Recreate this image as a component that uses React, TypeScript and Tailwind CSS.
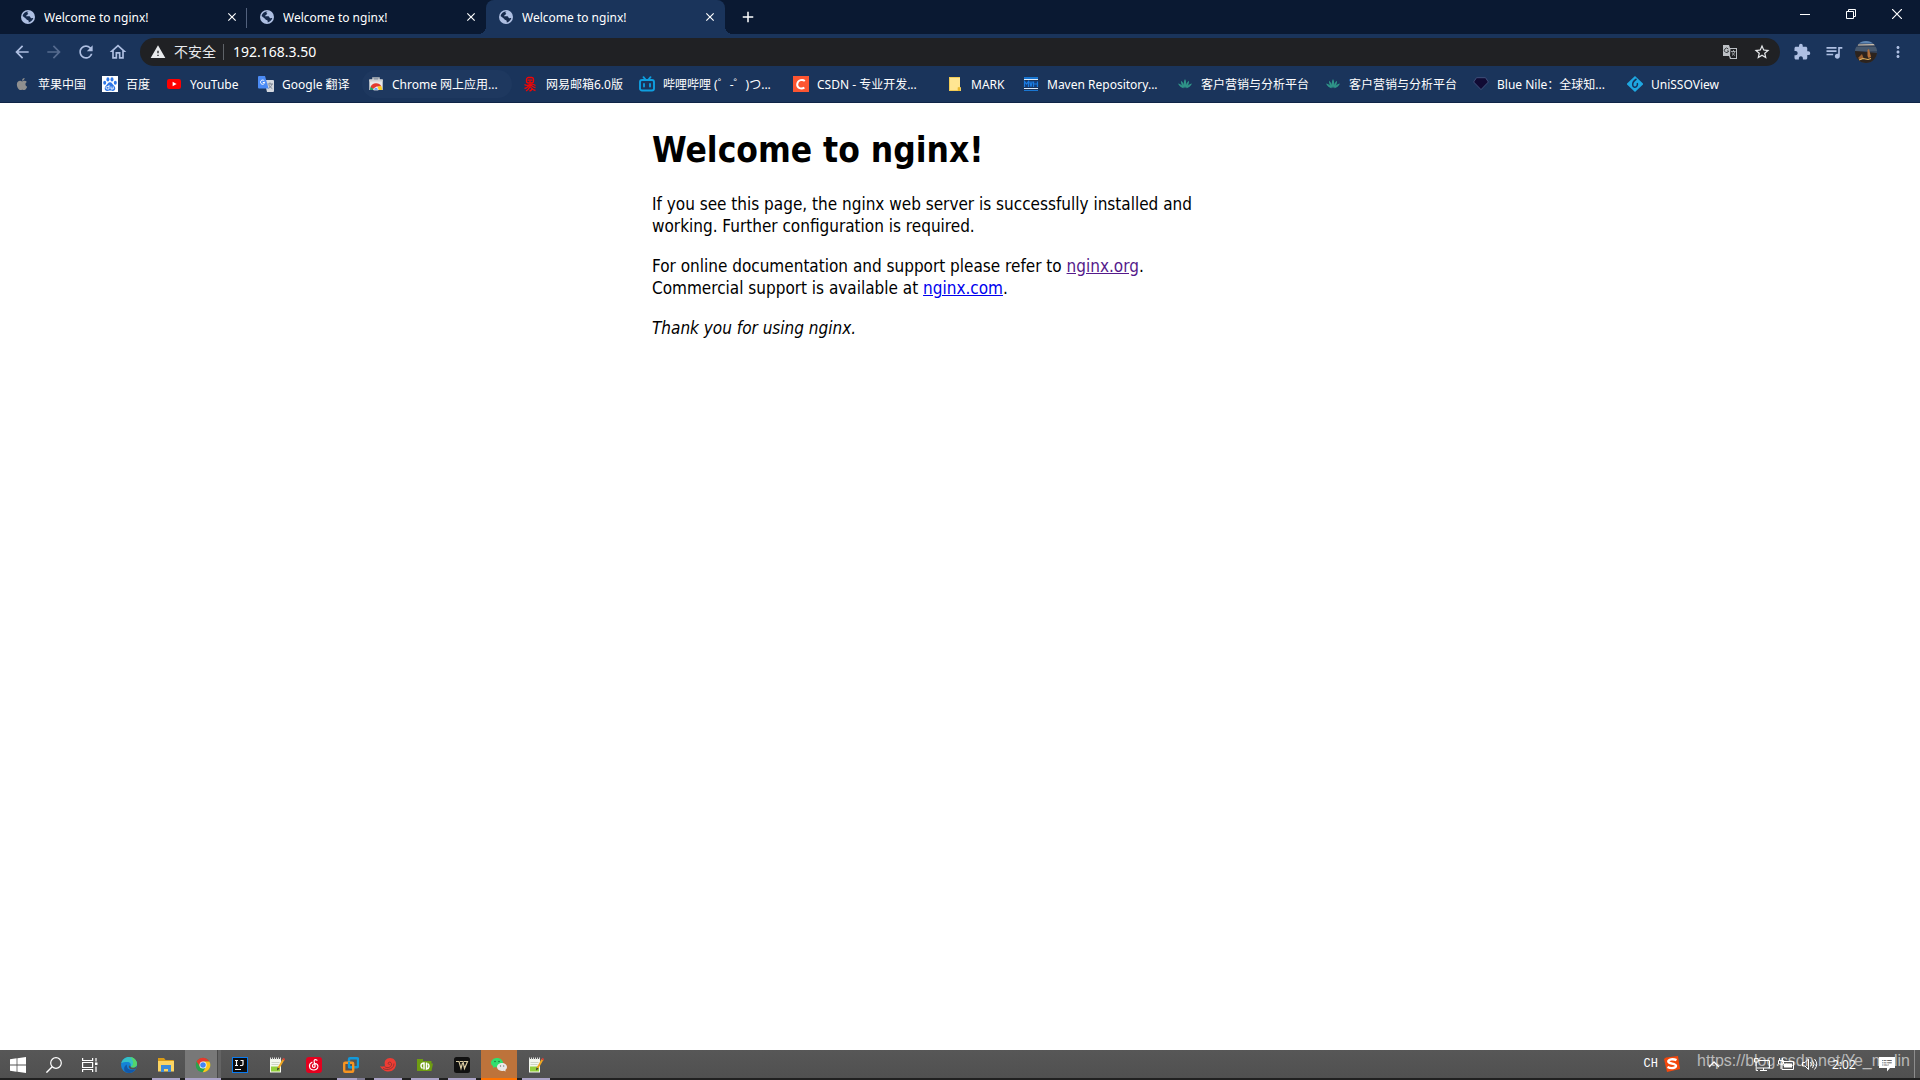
import React from "react";
import { FaApple } from "react-icons/fa";
import { MdArrowBack, MdArrowForward, MdRefresh, MdExtension, MdQueueMusic, MdMoreVert, MdStarBorder, MdWarning, MdClose, MdAdd, MdOutlineHome } from "react-icons/md";

const Svg = ({ children, className = "size-4", box = "0 0 16 16" }: { children: React.ReactNode; className?: string; box?: string }) => (
  <svg viewBox={box} className={`shrink-0 ${className}`} fill="none" aria-hidden="true">{children}</svg>
);

const Globe = () => (
  <Svg className="size-[14px]" box="0 0 14 14">
    <circle cx="7" cy="7" r="7" fill="#aebfe2" />
    <path d="M7.8 1.500C6 2 6 3.300 7.300 3.600 7.200 5 5.200 4.900 5 6.300H8.300c1.200.2.9 1.500 2 1.900.8.200 1.400-.3 2-.1-.5 2-2.300 4-4.600 4.500V10.900C7.400 9.800 5.400 10.200 5 8.700L1.600 6C2 3.400 4.600 1.300 7.800 1.500Z" fill="#15294b" />
  </Svg>
);

const Baidu = () => (
  <Svg>
    <rect width="16" height="16" fill="#fff" />
    <g fill="#2e77e8">
      <ellipse cx="5.9" cy="3.4" rx="1.5" ry="2.1" />
      <ellipse cx="10" cy="3.4" rx="1.5" ry="2.1" />
      <ellipse cx="2.7" cy="6.8" rx="1.5" ry="2" />
      <ellipse cx="13.3" cy="6.8" rx="1.5" ry="2" />
      <path d="M8 6.3c2 0 2.4 2 4 3.4 2 1.8 1.6 5-1 5.2-1.4.1-1.6-.3-3-.3s-1.6.4-3 .3c-2.6-.2-3-3.4-1-5.2C5.6 8.3 6 6.3 8 6.3Z" />
    </g>
    <path d="M7 9v4H5.2a1 1 0 0 1 0-2.4H7M9 10.500V13h2.200v-2.500" stroke="#fff" strokeWidth=".9" />
  </Svg>
);

const YouTube = () => (
  <Svg>
    <rect x="1" y="3" width="14" height="10" rx="2.200" fill="#f00" />
    <path d="m6.600 5.800 4 2.200-4 2.200Z" fill="#fff" />
  </Svg>
);

const Translate = () => (
  <Svg>
    <path d="M6 4h9a1 1 0 0 1 1 1v10a1 1 0 0 1-1 1H9Z" fill="#d4d8df" />
    <path d="M9.500 8H15M12 6.500V8m2 0c-.5 2-2 3.500-3.500 4.500M10.800 9c.8 1.600 2 2.800 3.500 3.600" stroke="#727d8c" strokeWidth=".9" />
    <path d="M1 0h6l3.600 12.500H1a1 1 0 0 1-1-1V1a1 1 0 0 1 1-1Z" fill="#4b8bf5" />
    <path d="M6.300 4.900A2.100 2.100 0 1 0 6.700 6.500H4.800" stroke="#fff" strokeWidth="1" />
  </Svg>
);

const WebStore = () => (
  <Svg>
    <path d="M5 4V2h6v2" stroke="#b9bcc0" strokeWidth="1.600" />
    <path d="M1.300 3.500h13.400V14H1.300Z" fill="#e8e8e8" />
    <path d="M1.300 3.500h13.400v2H1.300Z" fill="#cfd0d2" />
    <path d="M2 14a6 6 0 0 1 1.200-4L6 14Z" fill="#22a45d" />
    <path d="M2.600 11A6 6 0 0 1 13.400 10.500H8.500L6 13Z" fill="#e33b2e" />
    <path d="M13.200 10A6 6 0 0 1 14 14H9l1-3.500Z" fill="#fbcb1e" />
    <path d="M5.700 14a2.300 2.300 0 0 1 4.600 0Z" fill="#4285f4" stroke="#fff" strokeWidth=".7" />
  </Svg>
);

const NetEase = () => (
  <Svg>
    <g stroke="#f30505" strokeWidth="1.300">
      <rect x="4.500" y="1.500" width="7" height="5.500" rx="2" />
      <path d="M5.500 4.200h5M8 5v2M2.500 8.500c2 1.500 3.500 1 5.500 0s3.500-.5 5.500 1M2.500 12.500c3-.5 3.500-2.500 5.500-3.500 2 0 3 2.500 5.500 2.500M4 15c2.500-1 3-3 4-4.500 1 1.500 3 3.500 5.500 4M7.500 15c2-.5 2.500-1.500 3-3" />
    </g>
  </Svg>
);

const Bili = () => (
  <Svg>
    <rect x="1" y="4" width="14" height="10.500" rx="2" stroke="#0f9fe0" strokeWidth="1.900" />
    <path d="m4.500 1.200 2 2.300m5-2.300-2 2.300M5 8v2.500M11 8v2.500" stroke="#0f9fe0" strokeWidth="1.800" strokeLinecap="round" />
  </Svg>
);

const Csdn = () => (
  <Svg>
    <rect width="16" height="16" fill="#fc5531" />
    <path d="M11.800 4.900C9.800 3.200 4.800 3.400 4.200 8.200c-.4 4.200 4.200 5.200 7.200 3.500" stroke="#fff" strokeWidth="2" />
  </Svg>
);

const Note = () => (
  <Svg>
    <path d="M2 1h11v10l1 1v3H2Z" fill="#ffe692" />
    <path d="M2.500 1v14M2 1.500h11M2 14.500h9v-3h2.500" stroke="#f2cb55" />
    <path d="M11 11.500h2.500V15H11Z" fill="#e9b92f" />
  </Svg>
);

const Maven = () => (
  <Svg>
    <path d="M1 1h14v2H1Zm0 13h14v1H1Z" fill="#1976d2" />
    <path d="M1 3h14v1H1Zm0 9h14v1H1Z" fill="#dceafa" />
    <path d="M1 5h14v6H1Z" fill="#153d79" />
    <path d="M1.500 11V5.500L3.500 8l2-2.500V11M6.800 5.500l1.200 5 1.200-5M10.500 11V5.500M10.500 8h4M14.500 5.500V11" stroke="#1a7be0" strokeWidth="1.200" />
  </Svg>
);

const Leaf = () => (
  <Svg>
    <path d="M8 12C6.300 9 6.500 5 8 3c1.500 2 1.700 6 0 9ZM7.500 12C5 10.500 3.700 7.500 4 4.800 6 6 7.600 9 7.500 12Zm1 0C8.400 9 10 6 12 4.800c.3 2.700-1 5.700-3.500 7.200ZM7 12.300C4.500 12 2 10 1 7.500c2.500.2 5 2 6 4.800Zm2 0c1-2.800 3.500-4.600 6-4.800-1 2.500-3.500 4.500-6 4.800Z" fill="#2f9488" />
  </Svg>
);

const Gem = () => (
  <Svg>
    <path d="M3.500 1.700h9L15.400 6 8 13.600.6 6Z" fill="#100a33" stroke="#40507a" strokeWidth="1" strokeLinejoin="round" />
  </Svg>
);

const Uni = () => (
  <Svg>
    <path d="M8 0 15.700 7.200a1 1 0 0 1 0 1.600L8 16 .3 8.800a1 1 0 0 1 0-1.600Z" fill="#1ea7e1" />
    <path d="M9.500 3C7 4.500 5.500 6.500 5.700 9c.2 2.600 3.200 2.900 4.300.9.600-1.200.6-2 .3-2.900" stroke="#15325c" strokeWidth="1.500" />
  </Svg>
);

const tabs = [
  { title: "Welcome to nginx!", active: false, divider: true },
  { title: "Welcome to nginx!", active: false, divider: false },
  { title: "Welcome to nginx!", active: true, divider: false },
];

const bookmarks: { label: string; width: string; icon: React.ReactNode; hovered?: boolean }[] = [
  { label: "苹果中国", width: "w-[84px]", icon: <FaApple className="size-4 shrink-0 p-px text-[#8f8f8f]" /> },
  { label: "百度", width: "w-[60px]", icon: <Baidu /> },
  { label: "YouTube", width: "w-[88px]", icon: <YouTube /> },
  { label: "Google 翻译", width: "w-[106px]", icon: <Translate /> },
  { label: "Chrome 网上应用...", width: "w-[150px]", icon: <WebStore />, hovered: true },
  { label: "网易邮箱6.0版", width: "w-[113px]", icon: <NetEase /> },
  { label: "哔哩哔哩 (゜-゜)つ...", width: "w-[150px]", icon: <Bili /> },
  { label: "CSDN - 专业开发...", width: "w-[150px]", icon: <Csdn /> },
  { label: "MARK", width: "w-[72px]", icon: <Note /> },
  { label: "Maven Repository...", width: "w-[150px]", icon: <Maven /> },
  { label: "客户营销与分析平台", width: "w-[144px]", icon: <Leaf /> },
  { label: "客户营销与分析平台", width: "w-[144px]", icon: <Leaf /> },
  { label: "Blue Nile：全球知...", width: "w-[150px]", icon: <Gem /> },
  { label: "UniSSOView", width: "w-[114px]", icon: <Uni /> },
];

function TabStrip() {
  return (
    <header className="flex h-[34px] items-start bg-[#0a1932] pl-2 text-white">
      <div className="flex h-full" role="tablist">
        {tabs.map((tab, i) => (
          <div
            key={i}
            role="tab"
            aria-selected={tab.active}
            className={`relative flex h-full w-[239px] items-center pr-[7px] pl-[13px] ${tab.active ? "rounded-t-lg bg-[#1a345b]" : ""}`}
          >
            <Globe />
            <span className="ml-[9px] flex-1 truncate pt-px text-xs">{tab.title}</span>
            <button aria-label="关闭标签页" className="flex size-4 items-center justify-center"><MdClose className="size-[14px]" /></button>
            {tab.divider && <span className="absolute top-2 right-0 h-5 w-px bg-[#52617d]" />}
            {tab.active && (
              <>
                <span className="absolute bottom-0 -left-2 size-2 bg-[radial-gradient(circle_at_top_left,#0a1932_8px,#1a345b_8px)]" />
                <span className="absolute -right-2 bottom-0 size-2 bg-[radial-gradient(circle_at_top_right,#0a1932_8px,#1a345b_8px)]" />
              </>
            )}
          </div>
        ))}
      </div>
      <button aria-label="新标签页" className="ml-[9px] flex h-[34px] w-7 items-center justify-center"><MdAdd className="size-[18px]" /></button>
      <div className="ml-auto flex">
        <button aria-label="最小化" className="flex h-7 w-[46px] items-center justify-center">
          <Svg className="size-[10px]" box="0 0 10 10"><path d="M0 5.500h10" stroke="#fff" /></Svg>
        </button>
        <button aria-label="还原" className="flex h-7 w-[46px] items-center justify-center">
          <Svg className="size-[10px]" box="0 0 10 10"><path d="M.5 2.500h7v7h-7ZM2.500 2.500v-2h7v7h-2" stroke="#fff" /></Svg>
        </button>
        <button aria-label="关闭" className="flex h-7 w-[46px] items-center justify-center">
          <Svg className="size-[10px]" box="0 0 10 10"><path d="m0 0 10 10M10 0 0 10" stroke="#fff" strokeWidth="1.200" /></Svg>
        </button>
      </div>
    </header>
  );
}

const navButton = "flex size-7 shrink-0 items-center justify-center";

function Toolbar() {
  return (
    <div className="flex items-center gap-1 bg-[#1a345b] px-2 pt-1 text-[#aebfe2]">
      <button aria-label="后退" className={navButton}><MdArrowBack className="size-5" /></button>
      <button aria-label="前进" className={`${navButton} text-[#566b8f]`}><MdArrowForward className="size-5" /></button>
      <button aria-label="重新加载" className={navButton}><MdRefresh className="size-5" /></button>
      <button aria-label="主页" className={navButton}><MdOutlineHome className="size-5" /></button>
      <div className="ml-1 flex h-7 flex-1 items-center rounded-full bg-[#202124] pr-1 pl-[10px] text-[#e8eaed]">
        <MdWarning className="size-4 shrink-0" />
        <span className="ml-2 text-sm">不安全</span>
        <span className="mx-[7px] h-4 w-px bg-[#5f6368]" />
        <input aria-label="地址" defaultValue="192.168.3.50" className="min-w-0 flex-1 bg-transparent px-[2px] text-sm text-white outline-none" />
        <button aria-label="翻译此页" className={navButton}>
          <Svg>
            <path d="M1 1h6l1 3h7v11H8l-1-3H1Z" fill="#bdc1c6" />
            <path d="M8.500 5H14v9H9L8 11.500" fill="#202124" />
            <path d="M6.300 5A2.200 2.200 0 1 0 6.700 7H5" stroke="#3c4043" />
            <path d="M9 7.500h4.500M11.500 6v1.500M12.800 7.500c-.5 2-1.500 3-2.800 4M10.300 8.500c.7 1.500 1.500 2.200 2.700 3" stroke="#bdc1c6" strokeWidth=".8" />
          </Svg>
        </button>
        <button aria-label="为此标签页添加书签" className={`${navButton} ml-1`}><MdStarBorder className="size-[18px]" /></button>
      </div>
      <button aria-label="扩展程序" className={`${navButton} ml-1`}><MdExtension className="size-[18px]" /></button>
      <button aria-label="媒体控件" className={navButton}><MdQueueMusic className="size-5" /></button>
      <button aria-label="用户" className={navButton}>
        <Svg className="size-[22px] rounded-full" box="0 0 22 22">
          <path d="M0 0h22v22H0Z" fill="#34435a" />
          <path d="M0 0h22v2.500H0Z" fill="#5d86b5" />
          <path d="M3 3.500 20 3v1.200L3 4.500Z" fill="#d8c9b4" />
          <path d="M0 6h22v4H0Z" fill="#46586e" />
          <path d="M0 10 22 12v10H0Z" fill="#2c231e" />
          <path d="m12.500 9 1.500-1 1 4 1 4-2.500 1-1-2Z" fill="#b5703a" />
          <path d="m3 17 4-4 1.500 4-3 2Z" fill="#9b6131" />
          <path d="m4 19 4-1.500 5 1 3-1" stroke="#e5b35c" strokeWidth="1.200" />
        </Svg>
      </button>
      <button aria-label="自定义及控制" className={navButton}><MdMoreVert className="size-[18px]" /></button>
    </div>
  );
}

function BookmarksBar() {
  return (
    <nav className="flex h-[37px] items-center gap-1 border-b border-[#0f2547] bg-[#1a345b] pl-2 text-xs text-white">
      {bookmarks.map((b, i) => (
        <a
          key={i}
          href="#"
          className={`flex h-7 shrink-0 items-center gap-2 rounded-full pl-[6px] whitespace-nowrap ${b.width} ${b.hovered ? "bg-[#1e385f]" : ""}`}
        >
          {b.icon}
          <span className="pt-px">{b.label}</span>
        </a>
      ))}
    </nav>
  );
}

const Windows = () => (
  <Svg><path d="M0 2.200 6.600 1.300V7.600H0ZM7.400 1.200 16 0v7.600H7.400ZM0 8.400h6.600v6.300L0 13.800ZM7.400 8.400H16V16l-8.600-1.200Z" fill="#fff" /></Svg>
);
const Search = () => (
  <Svg><circle cx="10" cy="6" r="5.300" stroke="#fff" strokeWidth="1.200" /><path d="M6.200 9.800.4 15.600" stroke="#fff" strokeWidth="1.400" /></Svg>
);
const TaskView = () => (
  <Svg><path d="M.6 1v2.500h10V1M.6 15v-2.500h10V15M.6 5.500h10v5H.6ZM14 1v3.500M14 9.500V15" stroke="#fff" strokeWidth="1.200" /><path d="M13 5.500h2.500V8H13Z" fill="#fff" /></Svg>
);
const Edge = () => (
  <Svg>
    <circle cx="8" cy="8" r="8" fill="#1583d6" />
    <path d="M.3 6.300C1.200 2.600 4.300 0 8 0c5 0 8 3.600 8 6.800 0 2.600-2 4-4.200 4-1.800 0-2.600-.8-2.200-1.700.8-1.500-.3-4-3.200-4C3.600 5.100 1.300 5.500.3 6.300Z" fill="#35c1c6" />
    <path d="M9 0c4.500.4 7 3.800 7 6.800 0 2.600-2 4-4.200 4-1.300 0-2-.4-2.200-.9C13 9 13 3 9 0Z" fill="#55d66a" />
    <path d="M6 7.500C5 11 8 14.500 14.500 12.300 12 16.300 8 16.500 5.500 15.500 2 14 2.500 9 6 7.500Z" fill="#1258a8" />
    <path d="M9.600 9.100c-.4.900.4 1.700 2.200 1.700 1.600 0 3-.7 3.700-1.900l-.3 2.500c-4 2.400-7.700.6-7.400-2.200.1-.9 1.200-1 1.500-.1Z" fill="#525252" />
  </Svg>
);
const Folder = () => (
  <Svg>
    <path d="M0 1h6l1.500 2H15a1 1 0 0 1 1 1v3H0Z" fill="#d99b16" />
    <path d="M0 4h16v10.500H0Z" fill="#fcd462" />
    <path d="M3 8h10v7h-3v-3H6v3H3Z" fill="#3c8bd9" />
  </Svg>
);
const Chrome = () => (
  <Svg>
    <circle cx="8" cy="8" r="7.300" fill="#2ba24c" />
    <path d="M1.600 4.500A7.300 7.300 0 0 1 14.400 4.500L8 4.700 5 9.500Z" fill="#e5392e" />
    <path d="M14.400 4.500A7.300 7.300 0 0 1 7.700 15.300L11 9.800 8.500 4.500Z" fill="#fcc31e" />
    <circle cx="8" cy="8" r="3.500" fill="#fff" /><circle cx="8" cy="8" r="2.800" fill="#4285f4" />
  </Svg>
);
const Intellij = () => (
  <Svg>
    <rect x=".5" y=".5" width="15" height="15" fill="#0b0b0d" stroke="#0a7bef" />
    <path d="M3 3.500h3M4.500 3.500V8.500M3 8.500h3M8.500 3.500H11v4q0 1-1.500 1H8M3 12.500h6" stroke="#fff" strokeWidth="1.200" />
  </Svg>
);
const Notepad = () => (
  <Svg>
    <path d="M1 2h11v13.500H1Z" fill="#f4f7ee" />
    <path d="M2 9.500h9v5H2Z" fill="#92cf3c" />
    <path d="M1 1.500h11" stroke="#ddd" strokeWidth="2" strokeDasharray="1 1" />
    <path d="M2.500 5.500h8M2.500 7.500h7" stroke="#c4cabb" strokeWidth=".8" />
    <path d="M14.500 2.500 9.500 11" stroke="#f0a622" strokeWidth="2" />
    <path d="M13.800 1.500 16 2.800" stroke="#cc443b" strokeWidth="2" /><path d="m8.500 10.500-.5 3 2.500-1.800Z" fill="#453124" />
  </Svg>
);
const CloudMusic = () => (
  <Svg>
    <rect width="16" height="16" rx="3" fill="#e4001f" />
    <path d="M11 3.200C9 2 7.900 3 8.200 4.700l.9 4.200c.2 2-2.700 2-2.700 0 0-2.400 3.400-3 5-1.200 1.600 2.200-.2 5.300-3.400 5.300C2.500 13 2.300 7 6 5.200" stroke="#fff" strokeWidth="1.200" strokeLinecap="round" />
  </Svg>
);
const Vmware = () => (
  <Svg>
    <rect x="6" y="1.200" width="9" height="9" rx="1" stroke="#129adb" strokeWidth="2.400" />
    <rect x="1.200" y="5.800" width="9" height="9" rx="1" stroke="#f79420" strokeWidth="2.400" />
    <path d="M6 5v5.200h3" stroke="#129adb" strokeWidth="2" />
  </Svg>
);
const RedShell = () => (
  <Svg>
    <path d="M0 9c2 1 4 .6 5-.6C3.500 4 6.500 1 10 1c4 0 6 3 6 6 0 4-3 7.500-7.500 7.500C5 14.500 1.500 12.500 0 9Z" fill="#ee3c34" />
    <path d="M4.500 9.500c3 2.500 7.500.5 7-2.800C11 4.500 8 4.700 8.200 6.500c.2 1.200 1.500 1 1.500 1M3 11.500c5 2.500 11 0 11-5" stroke="#8b3430" strokeWidth=".9" />
  </Svg>
);
const GreenFolder = () => (
  <Svg>
    <path d="M0 2h6v2h8.500v2.500H16L14.500 14H0Z" fill="#6f9d12" />
    <path d="M7 12.500V6C3.500 6 3 10 5.500 11.500M9.500 5.500V12c3-.5 3.300-4 1.200-5.500" stroke="#fff" strokeWidth="1.500" />
  </Svg>
);
const WLogo = () => (
  <Svg>
    <rect width="16" height="16" rx="2.500" fill="#101010" />
    <path d="M2 4.500h3l2 7 1.500-5.500M6 4.500h3l1.500 7 3-7H10" stroke="#d9caa0" strokeWidth="1.200" />
  </Svg>
);
const WeChat = () => (
  <Svg>
    <path d="M6 1c3.500 0 6 2.200 6 4.800S9.500 10.500 6 10.500L4 10l-2 1 .3-1.800C.8 8.300 0 7.200 0 5.800 0 3.200 2.600 1 6 1Z" fill="#2fe06e" />
    <path d="M11 6c2.800 0 5 1.800 5 4.100 0 1.200-.6 2.200-1.600 2.900l.2 1.600-1.800-.9c-4 .8-6.800-1-6.800-3.600C6 7.800 8.200 6 11 6Z" fill="#e9e9e9" />
    <path d="M4 4.500h.01M8 4.500h.01" stroke="#146b36" strokeWidth="1.500" strokeLinecap="round" /><path d="M9.500 9h.01M12.700 9h.01" stroke="#777" strokeWidth="1.300" strokeLinecap="round" />
  </Svg>
);

type State = "idle" | "open" | "active" | "stacked" | "alert";
const apps: { name: string; icon: React.ReactNode; state: State }[] = [
  { name: "Microsoft Edge", icon: <Edge />, state: "idle" },
  { name: "文件资源管理器", icon: <Folder />, state: "open" },
  { name: "Google Chrome", icon: <Chrome />, state: "active" },
  { name: "IntelliJ IDEA", icon: <Intellij />, state: "idle" },
  { name: "Notepad++", icon: <Notepad />, state: "idle" },
  { name: "网易云音乐", icon: <CloudMusic />, state: "idle" },
  { name: "VMware", icon: <Vmware />, state: "stacked" },
  { name: "终端", icon: <RedShell />, state: "open" },
  { name: "Navigator", icon: <GreenFolder />, state: "open" },
  { name: "W", icon: <WLogo />, state: "open" },
  { name: "微信", icon: <WeChat />, state: "alert" },
  { name: "Notepad++ 2", icon: <Notepad />, state: "open" },
];

function AppButton({ name, icon, state }: (typeof apps)[number]) {
  return (
    <button
      aria-label={name}
      className={`relative flex h-[30px] w-9 items-center justify-center ${state === "active" ? "bg-[#787878]" : state === "alert" ? "bg-[#bd733b]" : ""}`}
    >
      {icon}
      {(state === "open" || state === "stacked") && <span className="absolute inset-x-1 bottom-0 h-[2px] bg-[#aba3c7]" />}
      {state === "stacked" && <span className="absolute right-1 bottom-0 h-[2px] w-2 bg-[#7d7991]" />}
      {state === "alert" && <span className="absolute inset-x-0 bottom-0 h-[2px] bg-[#ff7200]" />}
      {state === "active" && (
        <>
          <span className="absolute inset-y-0 right-0 w-1 border-l border-[#484848] bg-[#636363]" />
          <span className="absolute inset-x-0 bottom-0 h-[2px] bg-[#aba3c7]" />
        </>
      )}
    </button>
  );
}

function Taskbar() {
  return (
    <footer className="relative flex h-[30px] bg-[linear-gradient(#575757,#505050_28px,#202020_28px)] text-white">
      <button aria-label="开始" className="flex w-9 items-center justify-center"><Windows /></button>
      <button aria-label="搜索" className="flex w-9 items-center justify-center"><Search /></button>
      <button aria-label="任务视图" className="flex w-9 items-center justify-center"><TaskView /></button>
      <div className="ml-[3px] flex gap-px">
        {apps.map((app) => <AppButton key={app.name} {...app} />)}
      </div>
      <div className="ml-auto flex h-7 items-center">
        <span className="font-['Liberation_Mono'] text-xs">CH</span>
        <button aria-label="搜狗输入法" className="ml-[6px]">
          <Svg>
            <path d="M2 1.500 14 0l2 13-13 3L0 3Z" fill="#f4470c" />
            <path d="M12.500 4.200C9 2.500 4.300 3.200 4.300 5.500c0 2.500 7.700 1.600 7.700 4.300 0 2.600-5 3-8.500 1.200" stroke="#fff" strokeWidth="2.400" />
          </Svg>
        </button>
        <button aria-label="显示隐藏的图标" className="ml-7"><Svg className="h-4 w-3" box="0 0 12 16"><path d="m1 11 5-5 5 5" stroke="#fff" strokeWidth="1.400" /></Svg></button>
        <button aria-label="网络" className="ml-[34px]"><Svg><path d="M4 4.500h11.500v7.500H3M9.500 12v2.500M6 14.500h7M.5 2.500H4V6H.5ZM2.200 6v8.500H4" stroke="#fff" /></Svg></button>
        <button aria-label="电池" className="ml-2"><Svg><path d="M4 5.500h11.500v8H4ZM.5 4.500h5V8h-5ZM1.500 2v2.500m3-2.500v2.500M3 8v5" stroke="#fff" /><path d="M6 7.500h8v4H6Z" fill="#fff" /></Svg></button>
        <button aria-label="音量" className="ml-2"><Svg><path d="M.5 6.500H3L6.500 3v10.500L3 10H.5ZM8.500 6q1.500 2.200 0 4.500M10.500 4.500q3 3.700 0 7.500M12.500 3q4.500 5.200 0 10.500" stroke="#fff" /></Svg></button>
        <time className="ml-[14px] w-[25px] pt-px text-xs whitespace-nowrap">2:02</time>
        <button aria-label="通知" className="ml-[22px]"><Svg><path d="M0 1h16v11h-5l-3 3.500V12H0Z" fill="#fff" /><path d="M3 4.500h10M3 6.800h10M3 9h7" stroke="#666" /></Svg></button>
        <span className="mr-[5px] ml-[19px] h-7 w-px bg-[#8c8c8c]" />
      </div>
      <span className="pointer-events-none absolute top-0 right-[10px] font-['Liberation_Sans'] text-base leading-[22px] text-white/60">https://blog.csdn.net/Ye_molin</span>
    </footer>
  );
}

export default function App() {
  return (
    <div className="flex min-h-screen flex-col bg-white font-['Noto_Sans','Noto_Sans_CJK_SC',sans-serif]">
      <TabStrip />
      <Toolbar />
      <BookmarksBar />
      <main className="mx-auto w-full max-w-[616px] flex-1 py-6 font-['DejaVu_Sans_Condensed','DejaVu_Sans',sans-serif] text-[17px] leading-[22px] text-black">
        <h1 className="text-[35px] leading-[46px] font-bold">Welcome to nginx!</h1>
        <p className="mt-5">
          If you see this page, the nginx web server is successfully installed and<br />
          working. Further configuration is required.
        </p>
        <p className="mt-[18px]">
          For online documentation and support please refer to <a href="http://nginx.org/" className="text-[#551a8b] underline">nginx.org</a>.<br />
          Commercial support is available at <a href="http://nginx.com/" className="text-[#0000ee] underline">nginx.com</a>.
        </p>
        <p className="mt-[18px]"><em>Thank you for using nginx.</em></p>
      </main>
      <Taskbar />
    </div>
  );
}
